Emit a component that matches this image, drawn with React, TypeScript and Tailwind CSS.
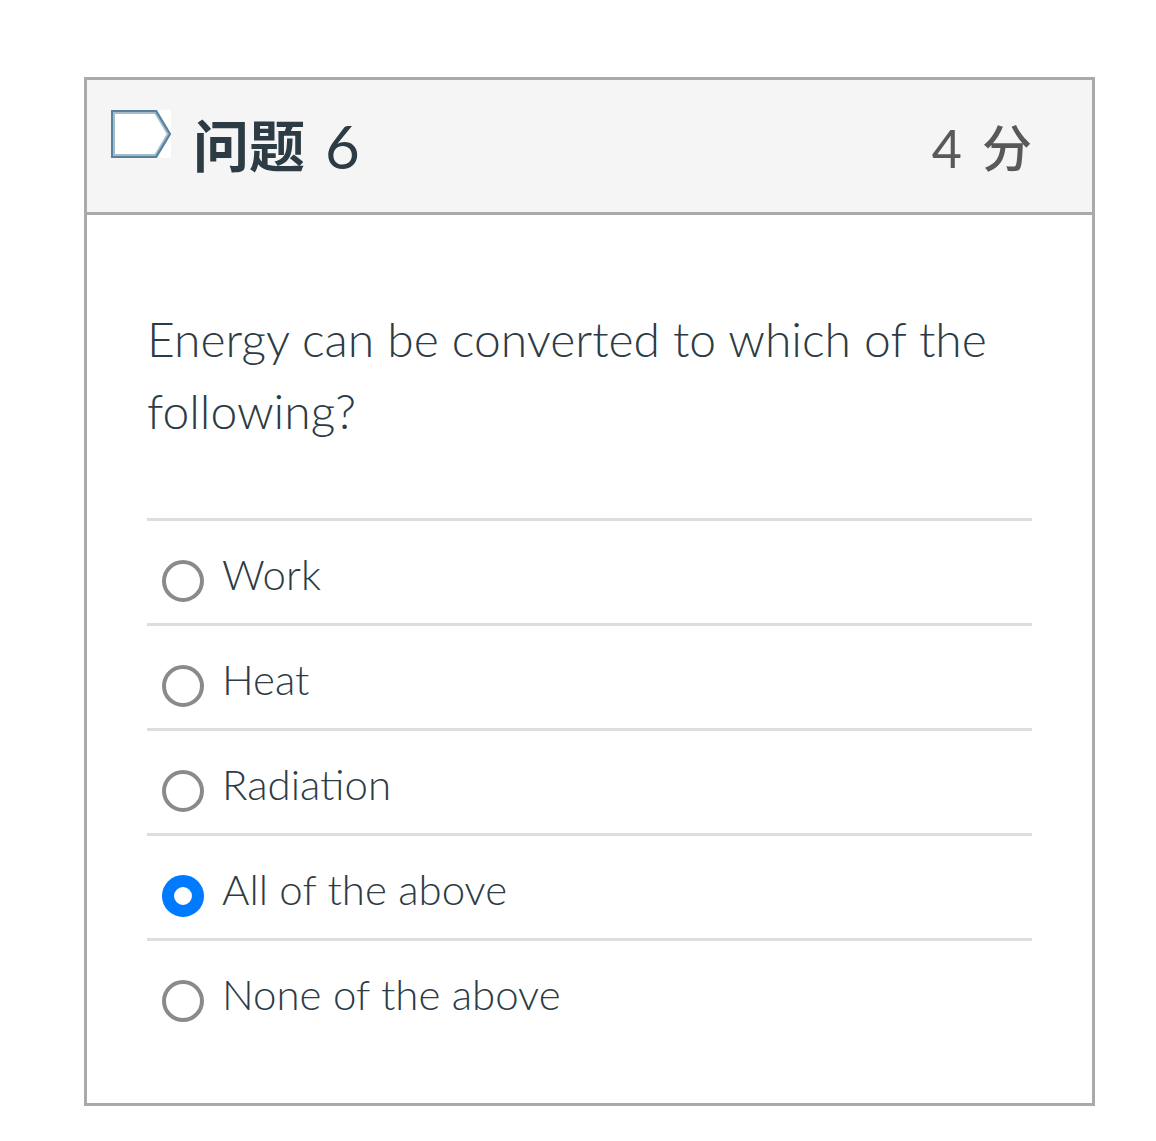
import { useState } from 'react';

const answers = ['Work', 'Heat', 'Radiation', 'All of the above', 'None of the above'];

export default function App() {
  const [selected, setSelected] = useState('All of the above');

  return (
    <main className="min-h-screen bg-white pt-[77px] pr-[61px] pb-9 pl-[84px] font-['Lato','Noto_Sans_CJK_SC',sans-serif] text-[#2d3b45]">
      <section className="border-3 border-[#aaaaaa]">
        <header className="flex items-start border-b-3 border-[#aaaaaa] bg-[#f5f5f5] pr-[60px] pb-[28px] pl-6">
          <button type="button" aria-label="Flag question" aria-pressed="false" className="mt-[30px] shrink-0">
            <svg className="h-12 w-[60px]" viewBox="0 0 60 48" fill="none">
              <path d="M0 0H60V48H0Z" fill="#fff" />
              <path d="M2 2H45L58 24L45 46H2Z" stroke="#a3bccb" strokeWidth="4" />
              <path d="M1 1H45L59 24L45 47H1Z" stroke="#56829d" strokeWidth="2" />
            </svg>
          </button>
          <h1 className="mt-[30px] ml-[22px] flex gap-5 text-[56px] leading-[72px] font-bold">
            问题 <span className="text-[60px] font-normal">6</span>
          </h1>
          <p className="mt-8 ml-auto flex gap-5 text-[50px] leading-[72px] font-medium text-[#595959]">
            <span className="text-[52px] font-normal">4</span> 分
          </p>
        </header>

        <fieldset aria-labelledby="question" className="px-[60px] pt-[88px] pb-[60px] font-light">
          <p id="question" className="text-5xl leading-[72px]">
            Energy can be converted to which of the following?
          </p>
          <div className="mt-[71px]">
            {answers.map((answer) => (
              <label key={answer} className="flex h-[105px] items-start border-t-3 border-[#dddddd] pl-[15px]">
                <input
                  type="radio"
                  name="answer"
                  value={answer}
                  checked={selected === answer}
                  onChange={() => setSelected(answer)}
                  className="mt-[39px] size-[42px] shrink-0 appearance-none rounded-full border-4 border-[#8a8a8e] bg-white checked:border-12 checked:border-[#007aff]"
                />
                <span className="mt-[23px] ml-[18px] text-[42px] leading-[60px]">{answer}</span>
              </label>
            ))}
          </div>
        </fieldset>
      </section>
    </main>
  );
}
